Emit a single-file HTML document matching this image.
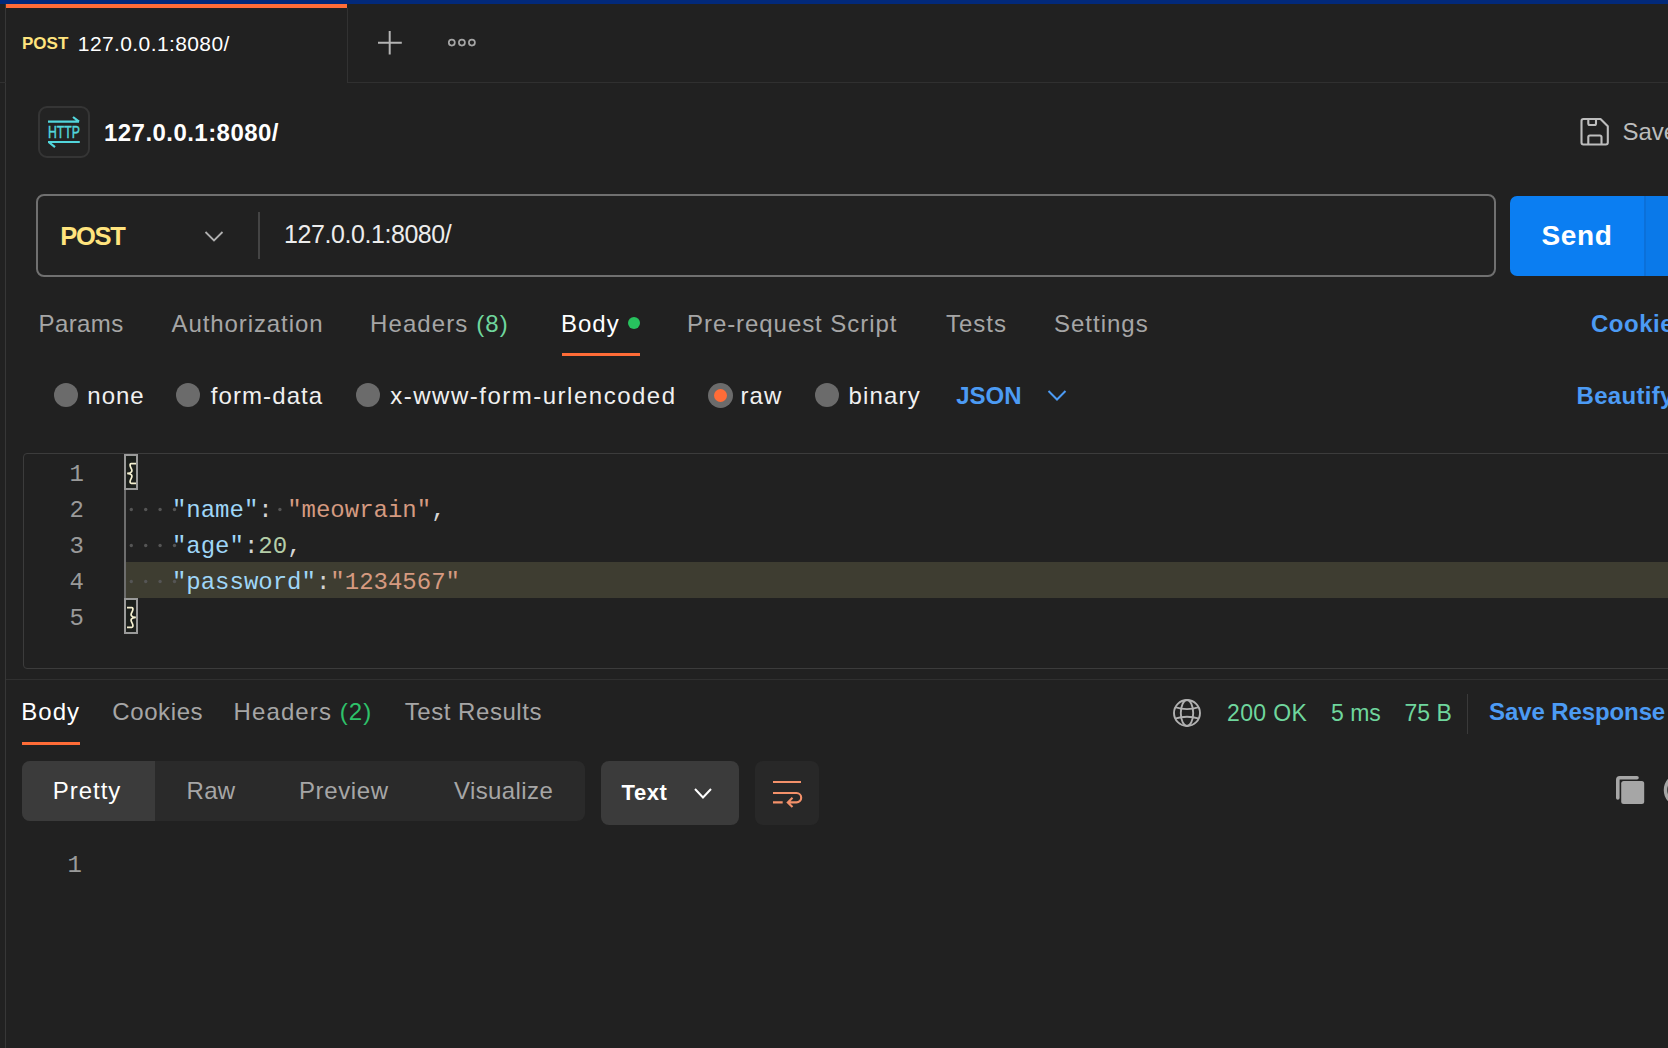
<!DOCTYPE html>
<html><head><meta charset="utf-8">
<style>
html,body{margin:0;padding:0;}
body{width:1668px;height:1048px;overflow:hidden;background:#212121;position:relative;font-family:"Liberation Sans",sans-serif;}
.a{position:absolute;}
.t{position:absolute;line-height:1;white-space:pre;font-size:24px;}
.g{color:#a6a6a6;}
.w{color:#ffffff;}
.b{color:#4c9bf4;font-weight:700;}
.grn{color:#6fd69d;}
.m{position:absolute;font-family:"Liberation Mono",monospace;font-size:24px;line-height:36px;white-space:pre;}
svg{position:absolute;overflow:visible;}
</style></head>
<body>
<!-- top strip -->
<div class="a" style="left:0;top:0;width:1668px;height:4px;background:#02297a"></div>
<!-- left gutter line -->
<div class="a" style="left:5px;top:4px;width:1px;height:1044px;background:#373737"></div>
<!-- active tab -->
<div class="a" style="left:6px;top:4px;width:341px;height:4px;background:#ff6c37"></div>
<div class="a" style="left:347px;top:8px;width:1px;height:75px;background:#323232"></div>
<div class="a" style="left:0;top:82px;width:6px;height:1px;background:#303030"></div>
<div class="a" style="left:348px;top:82px;width:1320px;height:1px;background:#303030"></div>
<div class="t" style="left:22px;top:35.3px;font-size:17px;font-weight:700;color:#ffe47e">POST</div>
<div class="t w" style="left:77.8px;top:33.1px;font-size:21px;letter-spacing:0.4px">127.0.0.1:8080/</div>
<!-- plus -->
<svg style="left:0;top:0" width="1" height="1"><path d="M389.7 31V54.4M378 42.7H401.8" stroke="#b4b4b4" stroke-width="2" fill="none"/>
<circle cx="451.8" cy="42.6" r="3" stroke="#a6a6a6" stroke-width="1.7" fill="none"/>
<circle cx="461.9" cy="42.6" r="3" stroke="#a6a6a6" stroke-width="1.7" fill="none"/>
<circle cx="471.9" cy="42.6" r="3" stroke="#a6a6a6" stroke-width="1.7" fill="none"/>
</svg>

<!-- HTTP icon box -->
<div class="a" style="left:38px;top:106px;width:48px;height:48px;border:2px solid #353535;border-radius:9px;background:#232323"></div>
<svg style="left:0;top:0" width="1" height="1">
<path d="M48 121.7H79M73 117L79 121.7M48 142H79.8M48.6 142L55 147.2" stroke="#52d6dc" stroke-width="2.2" fill="none"/>
<text x="48" y="138.4" font-family="Liberation Sans" font-size="17" fill="#52d6dc" stroke="#52d6dc" stroke-width="0.5" textLength="32" lengthAdjust="spacingAndGlyphs">HTTP</text>
</svg>
<div class="t w" style="left:104px;top:121.3px;font-weight:700;letter-spacing:0.45px">127.0.0.1:8080/</div>
<!-- save icon -->
<svg style="left:0;top:0" width="1" height="1">
<path d="M1583.5 119H1600.5L1607.8 126.3V142.5a2 2 0 0 1 -2 2H1583.5a2 2 0 0 1 -2 -2V121a2 2 0 0 1 2 -2Z M1588.3 119V123.5a1.5 1.5 0 0 0 1.5 1.5H1594.5a1.5 1.5 0 0 0 1.5 -1.5V119 M1588.3 144.5V137a1.5 1.5 0 0 1 1.5 -1.5H1600a1.5 1.5 0 0 1 1.5 1.5V144.5" stroke="#bdbdbd" stroke-width="2.1" fill="none" stroke-linejoin="round"/>
</svg>
<div class="t" style="left:1622.5px;top:119.5px;color:#bcbcbc">Save</div>

<!-- URL bar -->
<div class="a" style="left:36px;top:194px;width:1455.5px;height:79px;border:2px solid #707070;border-radius:8px"></div>
<div class="t" style="left:60.3px;top:223.8px;font-size:25.5px;font-weight:700;letter-spacing:-1.3px;color:#ffe47e">POST</div>
<svg style="left:0;top:0" width="1" height="1"><path d="M205.5 232L214 240.5L222.5 232" stroke="#b0b0b0" stroke-width="1.8" fill="none"/></svg>
<div class="a" style="left:258px;top:212px;width:1.5px;height:47px;background:#444"></div>
<div class="t" style="left:284px;top:221.5px;font-size:25px;letter-spacing:-0.43px;color:#ececec">127.0.0.1:8080/</div>
<!-- Send -->
<div class="a" style="left:1510px;top:196px;width:170px;height:80px;background:#0b7ef2;border-radius:7px"></div>
<div class="a" style="left:1646px;top:196px;width:22px;height:80px;background:#0a79e9"></div>
<div class="a" style="left:1644px;top:196px;width:2px;height:80px;background:#0b70d9"></div>
<div class="t w" style="left:1541.5px;top:222.3px;font-size:28px;font-weight:700;letter-spacing:0.6px">Send</div>

<!-- request tabs -->
<div class="t g" style="left:38.5px;top:311.7px;letter-spacing:0.4px">Params</div>
<div class="t g" style="left:171.6px;top:311.7px;letter-spacing:0.9px">Authorization</div>
<div class="t g" style="left:370px;top:311.7px;letter-spacing:1.1px">Headers <span class="grn">(8)</span></div>
<div class="t w" style="left:561px;top:311.7px;letter-spacing:1px">Body</div>
<div class="a" style="left:628px;top:317px;width:12px;height:12px;border-radius:50%;background:#27c25e"></div>
<div class="a" style="left:562px;top:353px;width:78px;height:2.5px;background:#ff6c37"></div>
<div class="t g" style="left:687px;top:311.7px;letter-spacing:0.94px">Pre-request Script</div>
<div class="t g" style="left:946px;top:311.7px;letter-spacing:1px">Tests</div>
<div class="t g" style="left:1054px;top:311.7px;letter-spacing:1px">Settings</div>
<div class="t b" style="left:1591px;top:311.7px;letter-spacing:0.5px">Cookies</div>

<!-- radio row -->
<div class="a" style="left:54px;top:383px;width:24px;height:24px;border-radius:50%;background:#6b6b6b"></div>
<div class="t w" style="left:87.3px;top:384.1px;letter-spacing:1px;color:#f0f0f0">none</div>
<div class="a" style="left:176px;top:383px;width:24px;height:24px;border-radius:50%;background:#6b6b6b"></div>
<div class="t" style="left:210.7px;top:384.1px;letter-spacing:1.1px;color:#f0f0f0">form-data</div>
<div class="a" style="left:356px;top:383px;width:24px;height:24px;border-radius:50%;background:#6b6b6b"></div>
<div class="t" style="left:390.3px;top:384.1px;letter-spacing:1.5px;color:#f0f0f0">x-www-form-urlencoded</div>
<div class="a" style="left:707.5px;top:382.5px;width:25px;height:25px;border-radius:50%;background:#6b6b6b"></div>
<div class="a" style="left:713.5px;top:388.5px;width:13px;height:13px;border-radius:50%;background:#ff6c37"></div>
<div class="t" style="left:740.6px;top:384.1px;letter-spacing:1px;color:#f0f0f0">raw</div>
<div class="a" style="left:815px;top:383px;width:24px;height:24px;border-radius:50%;background:#6b6b6b"></div>
<div class="t" style="left:848.4px;top:384.1px;letter-spacing:1.2px;color:#f0f0f0">binary</div>
<div class="t b" style="left:956.2px;top:384.1px">JSON</div>
<svg style="left:0;top:0" width="1" height="1"><path d="M1048.5 391L1057 399.5L1065.5 391" stroke="#4c9bf4" stroke-width="2" fill="none"/></svg>
<div class="t b" style="left:1576.5px;top:384.1px;letter-spacing:0.3px">Beautify</div>

<!-- editor -->
<div class="a" style="left:22.5px;top:452.5px;width:1700px;height:214.5px;border:1.2px solid #3c3c3c;border-radius:4px"></div>

<!-- line numbers -->
<div class="m" style="left:0;top:457px;width:84px;text-align:right;color:#9a9a9a">1
2
3
4
5</div>
<!-- current line highlight -->
<div class="a" style="left:126px;top:562px;width:1542px;height:36px;background:#3e3d31"></div>
<!-- indent guide -->
<div class="a" style="left:124px;top:489px;width:2px;height:110px;background:#6e6e6e"></div>
<!-- bracket boxes -->
<div class="a" style="left:124px;top:454px;width:10px;height:32px;border:2px solid #9a9a9a;background:#1c1f1c"></div>
<div class="a" style="left:124px;top:598px;width:10px;height:32px;border:2px solid #9a9a9a;background:#1c1f1c"></div>
<!-- whitespace dots -->
<svg style="left:0;top:0" width="1" height="1" fill="#555555">
<circle cx="131.3" cy="509.5" r="1.7"/><circle cx="145.7" cy="509.5" r="1.7"/><circle cx="160.1" cy="509.5" r="1.7"/><circle cx="174.5" cy="509.5" r="1.7"/>
<circle cx="131.3" cy="545.5" r="1.7"/><circle cx="145.7" cy="545.5" r="1.7"/><circle cx="160.1" cy="545.5" r="1.7"/><circle cx="174.5" cy="545.5" r="1.7"/>
<circle cx="131.3" cy="581.5" r="1.7"/><circle cx="145.7" cy="581.5" r="1.7"/><circle cx="160.1" cy="581.5" r="1.7"/><circle cx="174.5" cy="581.5" r="1.7"/>
<circle cx="279.9" cy="509.5" r="1.7"/>
</svg>
<svg style="left:0;top:0" width="1" height="1"><path d="M136 463.6H131.2C129.6 463.6 129.8 466 131.1 468.2C132.6 470.7 132.4 473 127.2 473.4C132.4 473.8 132.6 476.1 131.1 478.6C129.8 480.8 129.6 483.3 131.2 483.3H136M127 607.6H131.8C133.4 607.6 133.2 610 131.9 612.2C130.4 614.7 130.6 617 135.8 617.4C130.6 617.8 130.4 620.1 131.9 622.6C133.2 624.8 133.4 627.3 131.8 627.3H127" stroke="#f5f0d0" stroke-width="1.7" fill="none"/></svg>
<div class="m" style="left:171.9px;top:493px;color:#d4d4d4"><span style="color:#9fd6f7">"name"</span>: <span style="color:#d59a80">"meowrain"</span>,</div>
<div class="m" style="left:171.9px;top:529px;color:#d4d4d4"><span style="color:#9fd6f7">"age"</span>:<span style="color:#b5cea8">20</span>,</div>
<div class="m" style="left:171.9px;top:565px;color:#d4d4d4"><span style="color:#9fd6f7">"password"</span>:<span style="color:#d59a80">"1234567"</span></div>

<!-- splitter -->
<div class="a" style="left:6px;top:679px;width:1662px;height:1px;background:#303030"></div>

<!-- response tabs -->
<div class="t w" style="left:21.3px;top:700px;letter-spacing:1px">Body</div>
<div class="a" style="left:22px;top:742px;width:58px;height:2.5px;background:#ff6c37"></div>
<div class="t g" style="left:112.3px;top:700px;letter-spacing:0.6px">Cookies</div>
<div class="t g" style="left:233.6px;top:700px;letter-spacing:1.1px">Headers <span class="grn" style="color:#2ec26a">(2)</span></div>
<div class="t g" style="left:404.7px;top:700px;letter-spacing:0.55px">Test Results</div>
<svg style="left:0;top:0" width="1" height="1">
<circle cx="1187" cy="713" r="13" stroke="#b0b0b0" stroke-width="1.9" fill="none"/>
<ellipse cx="1187" cy="713" rx="6.2" ry="13" stroke="#b0b0b0" stroke-width="1.9" fill="none"/>
<path d="M1175 707.2Q1187 711 1199 707.2M1175 718.6Q1187 714.8 1199 718.6" stroke="#b0b0b0" stroke-width="1.9" fill="none"/>
</svg>
<div class="t grn" style="left:1227px;top:701.5px;font-size:23px;letter-spacing:0.35px">200 OK</div>
<div class="t grn" style="left:1331px;top:701.5px;font-size:23px;letter-spacing:0px">5 ms</div>
<div class="t grn" style="left:1404.5px;top:701.5px;font-size:23px;letter-spacing:0px">75 B</div>
<div class="a" style="left:1467px;top:694px;width:1px;height:40px;background:#3a3a3a"></div>
<div class="t b" style="left:1489px;top:699.8px;letter-spacing:-0.1px">Save Response</div>

<!-- segmented -->
<div class="a" style="left:22px;top:761px;width:563px;height:60px;border-radius:8px;background:#2a2a2a"></div>
<div class="a" style="left:22px;top:761px;width:133px;height:60px;border-radius:8px 0 0 8px;background:#3b3b3b"></div>
<div class="t w" style="left:52.7px;top:778.5px;letter-spacing:1px">Pretty</div>
<div class="t g" style="left:186.5px;top:778.5px;letter-spacing:0.3px">Raw</div>
<div class="t g" style="left:299px;top:778.5px;letter-spacing:0.6px">Preview</div>
<div class="t g" style="left:454px;top:778.5px;letter-spacing:0.4px">Visualize</div>
<!-- Text dropdown -->
<div class="a" style="left:601px;top:761px;width:138px;height:64px;border-radius:8px;background:#3b3b3b"></div>
<div class="t w" style="left:621.5px;top:781.5px;font-size:22px;font-weight:700;letter-spacing:0.6px">Text</div>
<svg style="left:0;top:0" width="1" height="1"><path d="M695 789L703 797.5L711 789" stroke="#ffffff" stroke-width="2" fill="none"/></svg>
<!-- wrap btn -->
<div class="a" style="left:755px;top:761px;width:64px;height:64px;border-radius:8px;background:#282828"></div>
<svg style="left:0;top:0" width="1" height="1">
<path d="M773 782H801M773 793H796.5a4.7 4.7 0 0 1 0 9.4H787.8M773 802.4H782.7M792.5 797.8L787.8 802.4L792.5 807" stroke="#f4916a" stroke-width="2.1" fill="none"/>
</svg>
<!-- copy icon -->
<svg style="left:0;top:0" width="1" height="1">
<path d="M1617.8 798V779.8a2 2 0 0 1 2-2H1637" stroke="#a6a6a6" stroke-width="3.6" fill="none" stroke-linecap="round"/>
<rect x="1621.2" y="781" width="23" height="23" rx="2.5" fill="#a6a6a6"/>
<circle cx="1681" cy="790" r="15.5" stroke="#a6a6a6" stroke-width="3.5" fill="none"/>
</svg>
<div class="m" style="left:0;top:848px;width:82px;text-align:right;color:#9a9a9a">1</div>
</body></html>
